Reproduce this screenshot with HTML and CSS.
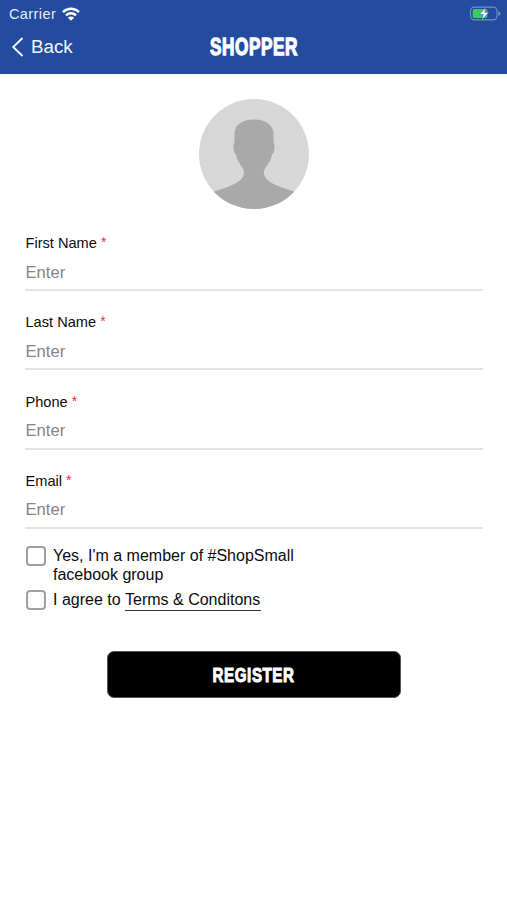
FILE: index.html
```html
<!DOCTYPE html>
<html lang="en">
<head>
<meta charset="utf-8">
<title>Shopper</title>
<link rel="stylesheet" href="styles.css">
</head>
<body>
<header class="header">
  <div class="status">
    <span class="carrier">Carrier</span>
    <svg class="wifi" width="18" height="14" viewBox="0 0 18 14" fill="none" stroke="#fff" stroke-width="2.5">
      <path d="M1 5.1C5.5.7 12.5.7 17 5.1M4 8.3c2.800-2.600 7.200-2.600 10 0"/>
      <path d="M9 13.8 5.9 10.7c1.700-1.600 4.500-1.600 6.200 0z" fill="#fff" stroke="none"/>
    </svg>
    <svg class="battery" width="31" height="16" viewBox="0 0 31 16">
      <rect x=".6" y="1.100" width="26.400" height="12.800" rx="3.800" fill="none" stroke="#7891c7" stroke-width="1.100"/>
      <path d="M28.400 5.200c2.800 1.200 2.800 3.600 0 4.800z" fill="#7891c7"/>
      <rect x="2.700" y="3" width="14.600" height="9" rx="1.800" fill="#38cd5d"/>
      <path d="M15.600 1.500 9.300 8.500h3.900l-1.500 5.400 7.200-7.600h-4.200z" fill="#fff" stroke="#234b9f" stroke-width=".5"/>
    </svg>
  </div>
  <nav class="nav">
    <a class="back">
      <svg width="13" height="20" viewBox="0 0 13 20" fill="none" stroke="#fff" stroke-width="1.800"><path d="M11.500 1 2.200 10l9.300 9"/></svg>
      <span>Back</span>
    </a>
    <h1 class="title">SHOPPER</h1>
  </nav>
</header>
<main class="content">
  <svg class="avatar" width="110" height="110" viewBox="0 0 110 110">
    <defs><clipPath id="disc"><circle cx="55" cy="55" r="55"/></clipPath></defs>
    <circle cx="55" cy="55" r="55" fill="#d7d7d7"/>
    <path clip-path="url(#disc)" fill="#a9a9a9" d="M55 20.500C67 20.500 74.500 26 74.500 35V43.500C76.200 45 75.600 54.500 73 55.500C72 61 69.500 65 67 68C65 71 64.300 73 65.300 76C67 81 72 84 79 87C85 89.500 90 90.500 95 92.500V112H15V92.500C20 90.500 25 89.500 31 87C38 84 43 81 44.500 76C45.500 73 45 71 43 68C40.500 65 38 61 37 55.500C34.400 54.500 33.800 45 35.500 43.500V35C35.500 26 43 20.500 55 20.500Z"/>
  </svg>
  <form class="form">
    <label class="field"><span class="label">First Name <i class="star">*</i></span><input class="input" placeholder="Enter"></label>
    <label class="field"><span class="label">Last Name <i class="star">*</i></span><input class="input" placeholder="Enter"></label>
    <label class="field"><span class="label">Phone <i class="star">*</i></span><input class="input" placeholder="Enter"></label>
    <label class="field"><span class="label">Email <i class="star">*</i></span><input class="input" placeholder="Enter"></label>
    <label class="check"><span class="box"></span><span class="text">Yes, I'm a member of #ShopSmall<br>facebook group</span></label>
    <label class="check"><span class="box"></span><span class="text">I agree to <a class="terms">Terms &amp; Conditons</a></span></label>
    <button class="register" type="button"><span>REGISTER</span></button>
  </form>
</main>
</body>
</html>
```
FILE: styles.css
```css
* { box-sizing: border-box; }
body {
  margin: 0;
  height: 900px;
  background: #fff;
  color: #0c0c0c;
  font-family: "Liberation Sans", sans-serif;
}
.header {
  height: 74px;
  background: #234b9f;
  color: #fff;
}
.status {
  display: flex;
  align-items: center;
  height: 27px;
  padding: 0 6px 0 9px;
}
.carrier {
  font-size: 14.5px;
  letter-spacing: 0.4px;
  color: #e4ebfa;
}
.wifi { margin-left: 6px; }
.battery { margin-left: auto; }
.nav {
  display: grid;
  grid-template-columns: 1fr auto 1fr;
  align-items: center;
  height: 40px;
  padding: 0 11px;
}
.back {
  display: flex;
  align-items: center;
  gap: 7px;
  font-size: 18.8px;
  color: #f2f5fc;
}
.title {
  margin: 0;
  font-size: 23.5px;
  line-height: 28px;
  font-weight: 700;
  letter-spacing: 0.8px;
  text-indent: 0.8px;
  -webkit-text-stroke: 1.3px #fff;
  transform: scaleX(0.73);
}
.content { padding: 25px 25px 0; }
.avatar {
  display: block;
  margin: 0 auto;
}
.form { margin-top: 25px; }
.field {
  display: block;
  height: 79.3px;
}
.label {
  display: block;
  height: 18px;
  font-size: 14.6px;
  line-height: 18px;
  padding-left: 0.5px;
}
.star {
  color: #f0303a;
  font-size: 14px;
  line-height: 1;
  font-style: normal;
  vertical-align: 1px;
}
.input {
  display: block;
  width: 458px;
  height: 39px;
  padding: 4px 0 0 0.5px;
  border: 0;
  border-bottom: 2px solid #e3e3e3;
  background: none;
  font: 16.6px "Liberation Sans", sans-serif;
}
.input::placeholder { color: #858585; }
.check {
  display: flex;
  gap: 7px;
  padding-left: 1px;
  margin-bottom: 6px;
  font-size: 16px;
  line-height: 18.5px;
}
.text { padding-top: 1px; }
.field + .check { margin-top: -5px; }
.box {
  width: 20px;
  height: 20px;
  border: 2px solid #a0a0a0;
  border-radius: 4px;
}
.terms {
  display: inline-block;
  border-bottom: 1.5px solid #333;
  padding-right: 1px;
}
.register {
  display: block;
  width: 294px;
  height: 47px;
  margin: 40px auto 0;
  padding: 2px 0 0;
  border: 1px solid #555;
  border-radius: 7px;
  background: #000;
  color: #fff;
  font: 700 21px "Liberation Sans", sans-serif;
}
.register span {
  display: inline-block;
  letter-spacing: 0.8px;
  text-indent: 0.8px;
  -webkit-text-stroke: 1.1px #fff;
  transform: scaleX(0.72);
}
```
